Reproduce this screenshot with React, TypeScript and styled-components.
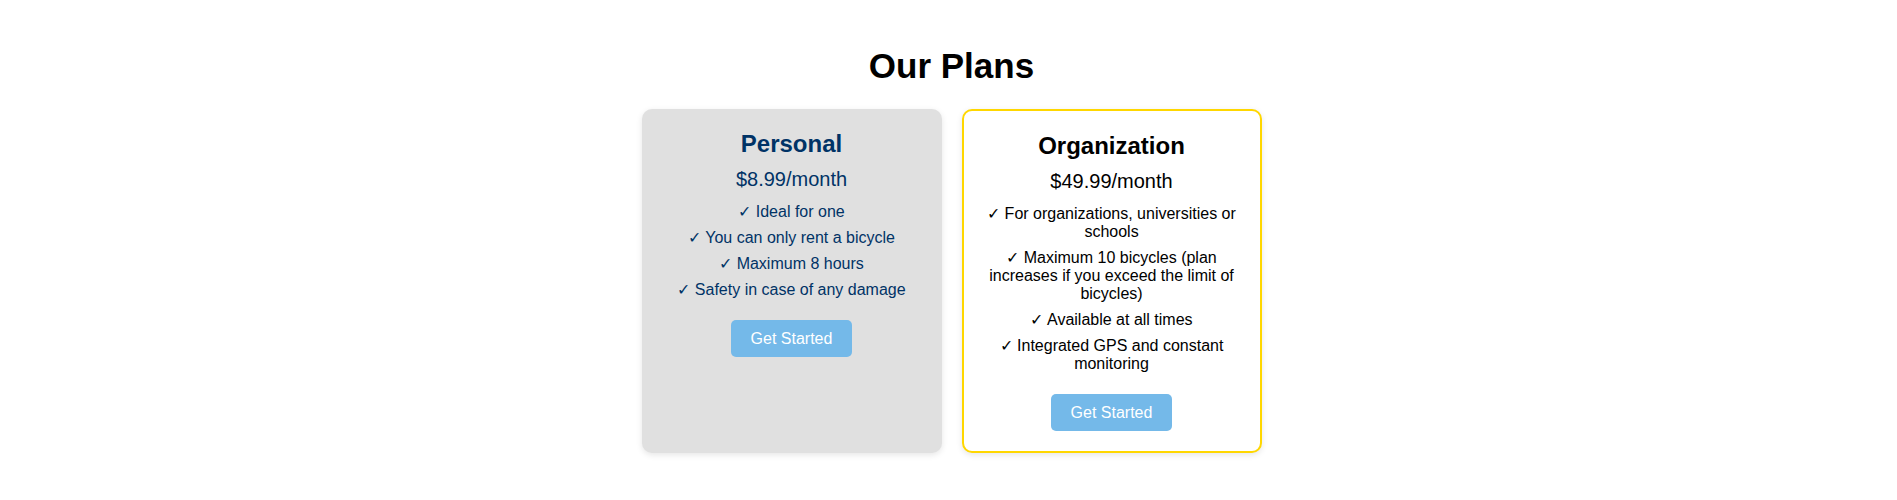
import React from "react";
import styled, { createGlobalStyle, css } from "styled-components";

const GlobalStyle = createGlobalStyle`
  html, body {
    margin: 0;
    padding: 0;
    background: #ffffff;
  }
  body {
    font-family: "Liberation Sans", Arial, sans-serif;
  }
`;

const Page = styled.section`
  display: flex;
  flex-direction: column;
  align-items: center;
  padding: 46px 0 40px 6px;
`;

const Title = styled.h1`
  margin: 0 0 23px;
  font-size: 35px;
  font-weight: 700;
  line-height: normal;
  color: #000000;
`;

const Cards = styled.div`
  display: flex;
  justify-content: center;
  align-items: stretch;
  gap: 20px;
`;

const Card = styled.article<{ $featured?: boolean }>`
  box-sizing: border-box;
  width: 300px;
  display: flex;
  flex-direction: column;
  align-items: stretch;
  text-align: center;
  padding: 21px 20px 20px;
  border-radius: 10px;
  box-shadow: 0 2px 6px rgba(0, 0, 0, 0.1);
  ${({ $featured }) =>
    $featured
      ? css`
          background: #ffffff;
          border: 2px solid #ffd700;
          color: #000000;
        `
      : css`
          background: #e0e0e0;
          color: #003366;
        `}
`;

const PlanName = styled.h3`
  margin: 0 0 10px;
  font-size: 24px;
  font-weight: 700;
  line-height: normal;
`;

const Price = styled.p`
  margin: 0 0 12px;
  font-size: 20px;
  line-height: normal;
`;

const Features = styled.ul`
  list-style: none;
  margin: 0 0 21px;
  padding: 0;
  display: flex;
  flex-direction: column;
  gap: 8px;
  font-size: 16px;
  line-height: 18px;
`;

const Feature = styled.li`
  margin: 0;
`;

const StartButton = styled.button`
  align-self: center;
  background: #74b9e9;
  color: #ffffff;
  border: none;
  border-radius: 5px;
  padding: 9px 20px;
  font-family: inherit;
  font-size: 16px;
  line-height: 19px;
  cursor: pointer;
`;

type Plan = {
  name: string;
  price: string;
  features: string[];
  featured?: boolean;
};

const plans: Plan[] = [
  {
    name: "Personal",
    price: "$8.99/month",
    features: [
      "Ideal for one",
      "You can only rent a bicycle",
      "Maximum 8 hours",
      "Safety in case of any damage",
    ],
  },
  {
    name: "Organization",
    price: "$49.99/month",
    featured: true,
    features: [
      "For organizations, universities or schools",
      "Maximum 10 bicycles (plan increases if you exceed the limit of bicycles)",
      "Available at all times",
      "Integrated GPS and constant monitoring",
    ],
  },
];

export default function App() {
  return (
    <>
      <GlobalStyle />
      <Page>
        <Title>Our Plans</Title>
        <Cards>
          {plans.map((plan) => (
            <Card key={plan.name} $featured={plan.featured}>
              <PlanName>{plan.name}</PlanName>
              <Price>{plan.price}</Price>
              <Features>
                {plan.features.map((f) => (
                  <Feature key={f}>✓ {f}</Feature>
                ))}
              </Features>
              <StartButton>Get Started</StartButton>
            </Card>
          ))}
        </Cards>
      </Page>
    </>
  );
}
